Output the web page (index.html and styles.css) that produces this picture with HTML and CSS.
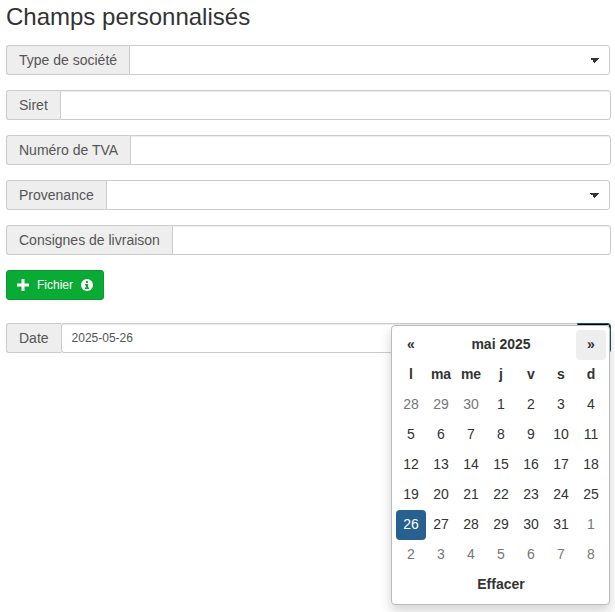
FILE: index.html
```html
<!DOCTYPE html>
<html lang="fr">
<head>
    <meta charset="UTF-8">
    <meta name="viewport" content="width=device-width, initial-scale=1.0">
    <title>Champs personnalisés</title>
    <link rel="stylesheet" href="styles.css">
</head>
<body>
    <form class="custom-fields">
        <h3>Champs personnalisés</h3>

        <div class="input-group select-group">
            <label class="addon" for="type">Type de société</label>
            <select class="form-control" id="type"><option value=""></option></select>
        </div>
        <div class="input-group">
            <label class="addon" for="siret">Siret</label>
            <input type="text" class="form-control" id="siret">
        </div>
        <div class="input-group">
            <label class="addon" for="tva">Numéro de TVA</label>
            <input type="text" class="form-control" id="tva">
        </div>
        <div class="input-group select-group">
            <label class="addon" for="provenance">Provenance</label>
            <select class="form-control" id="provenance"><option value=""></option></select>
        </div>
        <div class="input-group">
            <label class="addon" for="consignes">Consignes de livraison</label>
            <input type="text" class="form-control" id="consignes">
        </div>

        <button type="button" class="btn-file">
            <svg width="12" height="12" viewBox="0 0 12 12" fill="#fff"><path d="M4.500 0h3v4.500H12v3H7.500V12h-3V7.500H0v-3h4.500z"/></svg>
            <span>Fichier</span>
            <svg width="12" height="12" viewBox="0 0 12 12"><circle cx="6" cy="6" r="6" fill="#fff"/><path d="M5 2h2v2H5zM4 5h3v3.500h1V10H4V8.500h1v-2H4z" fill="#0aab35"/></svg>
        </button>

        <div class="input-group date-group">
            <label class="addon" for="date">Date</label>
            <input type="text" class="form-control" id="date" value="2025-05-26">
            <button type="button" class="btn-date" aria-label="Calendrier"></button>

            <div class="datepicker">
                <table>
                    <thead>
                        <tr>
                            <th><button type="button">«</button></th>
                            <th colspan="5"><button type="button">mai 2025</button></th>
                            <th><button type="button" class="hover">»</button></th>
                        </tr>
                        <tr><th>l</th><th>ma</th><th>me</th><th>j</th><th>v</th><th>s</th><th>d</th></tr>
                    </thead>
                    <tbody>
                        <tr><td class="old">28</td><td class="old">29</td><td class="old">30</td><td>1</td><td>2</td><td>3</td><td>4</td></tr>
                        <tr><td>5</td><td>6</td><td>7</td><td>8</td><td>9</td><td>10</td><td>11</td></tr>
                        <tr><td>12</td><td>13</td><td>14</td><td>15</td><td>16</td><td>17</td><td>18</td></tr>
                        <tr><td>19</td><td>20</td><td>21</td><td>22</td><td>23</td><td>24</td><td>25</td></tr>
                        <tr><td class="active">26</td><td>27</td><td>28</td><td>29</td><td>30</td><td>31</td><td class="new">1</td></tr>
                        <tr><td class="new">2</td><td class="new">3</td><td class="new">4</td><td class="new">5</td><td class="new">6</td><td class="new">7</td><td class="new">8</td></tr>
                    </tbody>
                    <tfoot>
                        <tr><th colspan="7"><button type="button">Effacer</button></th></tr>
                    </tfoot>
                </table>
            </div>
        </div>
    </form>
</body>
</html>
```
FILE: styles.css
```css
* {
    box-sizing: border-box;
}
body {
    min-height: 100vh;
    margin: 0;
    background-color: #fff;
    color: #333;
    font-family: "Liberation Sans", Arial, sans-serif;
    font-size: 14px;
    line-height: 20px;
}
.custom-fields {
    padding: 4px 4px 0 6px;
}
h3 {
    margin: 0 0 15px;
    font-size: 24px;
    font-weight: normal;
    line-height: 26px;
}
.input-group {
    display: flex;
    height: 30px;
    margin-bottom: 15px;
}
.select-group {
    margin-right: 1px;
}
.addon {
    padding: 4px 12px;
    border: 1px solid #ccc;
    border-right: none;
    border-radius: 3px 0 0 3px;
    background-color: #eee;
    color: #555;
    white-space: nowrap;
}
.form-control {
    flex: 1;
    min-width: 0;
    padding: 0 10px;
    border: 1px solid #ccc;
    border-radius: 0 3px 3px 0;
    background-color: #fff;
    box-shadow: inset 0 1px 1px rgba(0, 0, 0, 0.075);
    color: #555;
    font-family: inherit;
    font-size: 12px;
}
select.form-control {
    appearance: none;
    background-image: linear-gradient(to bottom right, #333 50%, transparent 50%), linear-gradient(to bottom left, #333 50%, transparent 50%);
    background-position: right 9px center, right 14px center;
    background-repeat: no-repeat;
    background-size: 5px 5px;
    box-shadow: none;
}
.btn-file {
    display: flex;
    align-items: center;
    gap: 8px;
    height: 30px;
    margin-bottom: 23px;
    padding: 0 10px;
    border: 1px solid #099830;
    border-radius: 3px;
    background-color: #0aab35;
    color: #fff;
    font-family: inherit;
    font-size: 12px;
}
.date-group {
    position: relative;
}
.date-group .form-control {
    border-radius: 3px 0 0 3px;
    border-right: none;
}
.btn-date {
    width: 34px;
    padding: 0;
    border: 1px solid #10596b;
    border-radius: 0 3px 3px 0;
    background-color: #fff;
    box-shadow: inset 0 0 0 1px #000;
}
.datepicker {
    position: absolute;
    top: 2px;
    right: 1px;
    padding: 4px 3px 4px 4px;
    border: 1px solid #bbb;
    border-radius: 4px;
    background-color: #fff;
    box-shadow: 0 6px 12px rgba(0, 0, 0, 0.175);
}
.datepicker table {
    width: 210px;
    border-collapse: collapse;
    table-layout: fixed;
}
.datepicker th, .datepicker td {
    height: 30px;
    padding: 0 0 2px;
    text-align: center;
}
.datepicker button {
    display: block;
    width: 100%;
    height: 30px;
    padding: 0 0 2px;
    border: none;
    border-radius: 4px;
    background: none;
    color: #333;
    font: inherit;
    cursor: pointer;
}
.datepicker th:has(button) {
    padding: 0;
}
.datepicker .hover {
    background-color: #eee;
}
.datepicker .old, .datepicker .new {
    color: #777;
}
.datepicker .active {
    border-radius: 4px;
    background-color: #286090;
    color: #fff;
}
```
